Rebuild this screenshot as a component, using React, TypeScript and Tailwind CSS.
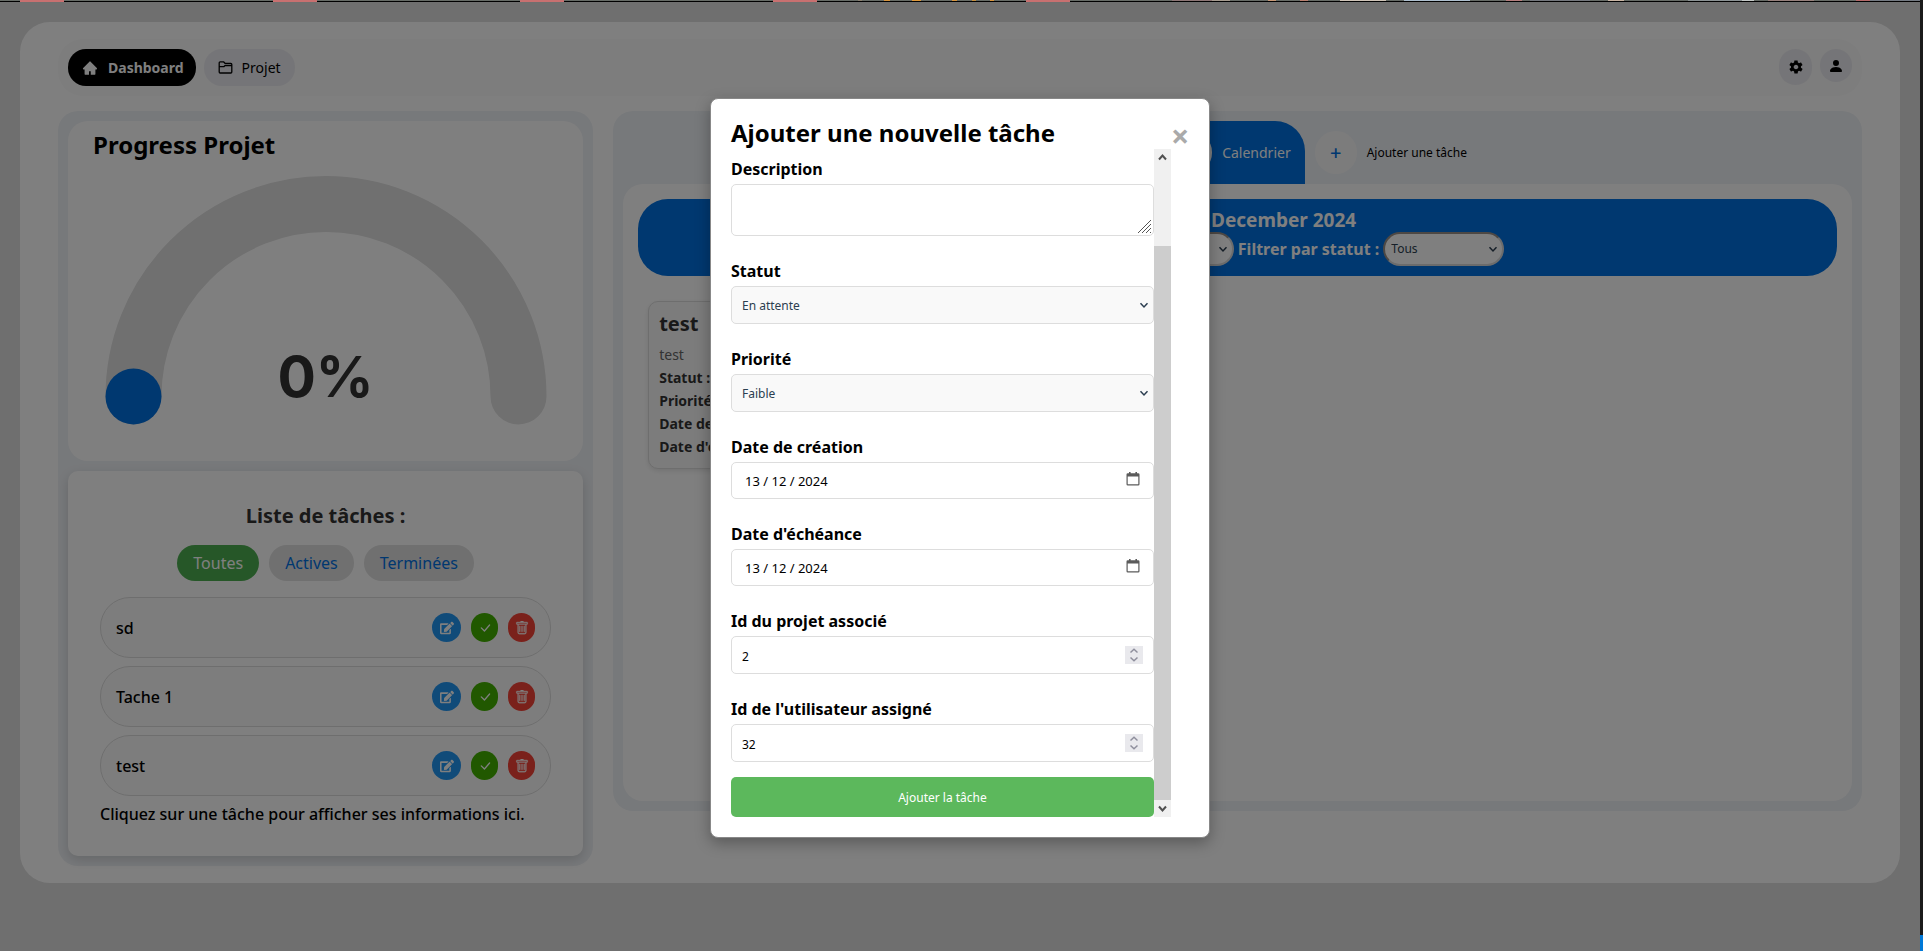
import type { ReactNode } from "react";
import { AiFillHome } from "react-icons/ai";
import { IoMdSettings } from "react-icons/io";
import { BsPersonFill, BsCheckLg, BsTrash } from "react-icons/bs";
import { FaEdit } from "react-icons/fa";

const browserTabs = [20, 273, 520, 773, 1026];
const bookmarks: [number, number, string][] = [
  [858, 4, "#8a7f70"], [884, 6, "#d9963f"], [912, 9, "#e09a3c"], [952, 5, "#d9963f"], [972, 4, "#c8913f"], [990, 4, "#d9963f"],
  [1172, 40, "#8d7676"], [1212, 18, "#a69c90"], [1268, 8, "#c99a78"], [1300, 8, "#b98070"], [1340, 46, "#cfc4b8"],
  [1404, 66, "#aebfce"], [1506, 16, "#b57f7f"], [1530, 60, "#74777d"], [1608, 16, "#c9b5a4"], [1688, 60, "#8b9294"],
  [1742, 12, "#c4c8c6"], [1768, 46, "#96807c"], [1856, 14, "#b56a6a"], [1870, 50, "#747a82"],
];

function Chevron({ className }: { className: string }) {
  return (
    <svg aria-hidden="true" viewBox="0 0 10 10" className={className} fill="none" stroke="currentColor" strokeWidth="1.5">
      <path d="M1.5 3.2 5 7l3.5-3.8" />
    </svg>
  );
}

function FolderIcon() {
  return (
    <svg aria-hidden="true" viewBox="0 0 15 15" className="size-[15px]" fill="none" stroke="currentColor" strokeWidth="1.3" strokeLinejoin="round">
      <path d="M1.200 12V2.800q0-1 1-1h3.300l1.700 1.700h5.600q1 0 1 1V12q0 1-1 1H2.200q-1 0-1-1zM1.200 6.700h4.600l1-1h7" />
    </svg>
  );
}

function TaskItem({ name }: { name: string }) {
  const button = "flex h-[29px] items-center justify-center rounded-full text-white";
  return (
    <li className="flex h-[61px] items-center justify-between rounded-[30px] border border-[#dddddd] bg-[#fbfbfb] px-[15px]">
      <span className="font-medium">{name}</span>
      <span className="flex gap-[10px]">
        <button type="button" aria-label="Modifier" className={`${button} w-[29px] bg-[#2196f3]`}>
          <FaEdit className="size-[14px]" />
        </button>
        <button type="button" aria-label="Terminer" className={`${button} w-[27px] bg-[#43b000]`}>
          <BsCheckLg className="size-[14px]" />
        </button>
        <button type="button" aria-label="Supprimer" className={`${button} w-[27px] bg-[#f44336]`}>
          <BsTrash className="size-[14px]" stroke="currentColor" strokeWidth="0.3" />
        </button>
      </span>
    </li>
  );
}

function Field({ id, label, children }: { id: string; label: string; children: ReactNode }) {
  return (
    <div className="mb-6">
      <label htmlFor={id} className="mb-[3px] block text-base leading-[23px] font-bold">
        {label}
      </label>
      <div className="relative flex">{children}</div>
    </div>
  );
}

const control = "w-full rounded-[5px] border border-[#dddddd] px-[10px] pt-[2px] text-xs";

function SelectField({ id, label, option }: { id: string; label: string; option: string }) {
  return (
    <Field id={id} label={label}>
      <select id={id} className={`${control} h-[38px] appearance-none bg-[#f9f9f9] text-[#2c3e50]`}>
        <option>{option}</option>
      </select>
      <Chevron className="pointer-events-none absolute top-[14px] right-[5px] size-[10px] text-[#2c3e50]" />
    </Field>
  );
}

function DateField({ id, label }: { id: string; label: string }) {
  return (
    <Field id={id} label={label}>
      <input id={id} type="text" defaultValue="13 / 12 / 2024" className="h-[37px] w-full rounded-[5px] border border-[#dddddd] px-[13px] text-[13px]" />
      <svg aria-hidden="true" viewBox="0 0 14 14" className="absolute top-[10px] right-[14px] size-[14px]" fill="#5b5b5b">
        <path fillRule="evenodd" d="M3 0h1.600v1.200h4.800V0H11v1.200h1.200A1.300 1.300 0 0 1 13.500 2.500v9.700a1.300 1.300 0 0 1-1.300 1.300H1.800A1.300 1.300 0 0 1 .5 12.200V2.500a1.300 1.300 0 0 1 1.300-1.300H3zM1.700 4.400v7.500q0 .4.4.4h9.800q.4 0 .4-.4V4.400z" />
      </svg>
    </Field>
  );
}

function NumberField({ id, label, value }: { id: string; label: string; value: string }) {
  return (
    <Field id={id} label={label}>
      <input id={id} type="text" inputMode="numeric" defaultValue={value} className={`${control} h-[38px]`} />
      <svg aria-hidden="true" viewBox="0 0 18 18" className="absolute top-[10px] right-[11px] size-[18px] bg-[#e9e9ed]" fill="none" stroke="#8f8f9d" strokeWidth="1.5">
        <path d="M5.500 6.500 9 3.300l3.500 3.200M5.500 11.500 9 14.700l3.500-3.200" />
      </svg>
    </Field>
  );
}

function ProgressCard() {
  return (
    <section className="h-[340px] rounded-[20px] bg-white px-[25px] pt-[8px]">
      <h2 className="text-2xl leading-8 font-bold">Progress Projet</h2>
      <div className="relative mx-auto mt-[15px] w-[442px]">
        <svg aria-hidden="true" viewBox="0 0 442 249" className="w-full" fill="none" strokeLinecap="round">
          <path d="M28.500 220.500a192.500 192.500 0 0 1 385 0" stroke="#e0e0e0" strokeWidth="56" />
          <circle cx="28.500" cy="220.500" r="28" fill="#0070e0" />
        </svg>
        <p className="absolute inset-x-0 top-[165px] text-center font-['Inter',sans-serif] text-[57px] leading-[72px] font-bold text-[#333333]">0%</p>
      </div>
    </section>
  );
}

function TaskListCard() {
  const pill = "h-[36px] rounded-[18px] px-4";
  return (
    <section className="h-[385px] rounded-[10px] bg-white px-8 pt-8 shadow-[0_4px_12px_rgba(0,0,0,0.15)]">
      <h2 className="text-center text-xl leading-[26px] font-bold text-[#333333]">Liste de tâches :</h2>
      <div className="mt-4 flex justify-center gap-[10px]">
        <button type="button" className={`${pill} bg-[#4caf50] text-white`}>Toutes</button>
        <button type="button" className={`${pill} bg-[#e0e0e0] text-[#0070e0]`}>Actives</button>
        <button type="button" className={`${pill} bg-[#e0e0e0] text-[#0070e0]`}>Terminées</button>
      </div>
      <ul className="mt-4 flex flex-col gap-2">
        <TaskItem name="sd" />
        <TaskItem name="Tache 1" />
        <TaskItem name="test" />
      </ul>
      <p className="mt-[6px] leading-6 font-medium">Cliquez sur une tâche pour afficher ses informations ici.</p>
    </section>
  );
}

function FilterSelect({ label, value }: { label: string; value: string }) {
  return (
    <span className="relative flex">
      <select aria-label={label} className="h-[34px] w-[121px] appearance-none rounded-[17px] border-2 border-t-[#9a9088] border-r-[#d8d8d8] border-b-[#d8d8d8] border-l-[#9a9088] bg-white px-[6px] text-xs font-normal text-[#2c3e50]">
        <option>{value}</option>
      </select>
      <Chevron className="pointer-events-none absolute top-3 right-[6px] size-[10px] text-[#2c3e50]" />
    </span>
  );
}

function CalendarPanel() {
  return (
    <section className="h-[700px] min-w-0 rounded-[20px] bg-[#eff2f6] px-[10px] pt-[10px]">
      <nav className="flex items-center justify-center gap-[10px] pl-[148px]">
        <button type="button" className="flex h-[63px] items-center gap-[10px] rounded-t-[30px] bg-[#0070e0] px-[14px] text-sm text-white">
          <span className="h-[43px] w-[42px] rounded-full bg-white" />
          Calendrier
        </button>
        <button type="button" className="flex items-center gap-[10px] text-xs">
          <span className="flex h-[43px] w-[42px] items-center justify-center rounded-full bg-[#f9f9f9] text-xl font-medium text-[#0070e0]">+</span>
          Ajouter une tâche
        </button>
      </nav>
      <div className="h-[617px] rounded-[20px] bg-white px-[15px] pt-[15px]">
        <header className="flex h-[77px] flex-col items-center rounded-[30px] bg-[#0070e0] pt-[8px] font-bold text-white">
          <h2 className="pl-[92px] text-[19px] leading-[26px]">December 2024</h2>
          <div className="flex h-8 items-center gap-[4px]">
            <span className="w-[138px]" />
            <FilterSelect label="Filtre" value="" />
            <span>Filtrer par statut :</span>
            <FilterSelect label="Filtrer par statut" value="Tous" />
          </div>
        </header>
        <article className="mt-[25px] ml-[10px] w-[240px] rounded-[10px] border border-[#dddddd] bg-[#f9f9f9] px-[10px] pt-[9px] pb-[10px] text-sm leading-[23px] font-bold text-[#333333] shadow-[0_2px_5px_rgba(0,0,0,0.1)]">
          <h3 className="text-xl leading-[26px]">test</h3>
          <p className="mt-[6px] font-normal text-[#666666]">test</p>
          <p>Statut :</p>
          <p>Priorité</p>
          <p>Date de</p>
          <p>Date d'é</p>
        </article>
      </div>
    </section>
  );
}

function TaskModal() {
  return (
    <div role="dialog" aria-labelledby="modal-title" className="flex w-[500px] rounded-[8px] border border-[#888888] bg-white p-5 shadow-[0_5px_15px_rgba(0,0,0,0.3)]">
      <div className="min-w-0 flex-1">
        <h2 id="modal-title" className="text-2xl leading-[28px] font-bold">Ajouter une nouvelle tâche</h2>
        <div className="mt-[2px] flex">
          <form className="min-w-0 flex-1 pt-[9px]" onSubmit={(event) => event.preventDefault()}>
            <Field id="description" label="Description">
              <textarea id="description" className={`${control} h-[52px] resize-none`} />
              <svg aria-hidden="true" viewBox="0 0 15 15" className="absolute right-[2px] bottom-[2px] size-[15px]" stroke="#555555">
                <path d="M1 14 14 1M5 14l9-9M9 14l5-5M13 14l1-1" />
              </svg>
            </Field>
            <SelectField id="statut" label="Statut" option="En attente" />
            <SelectField id="priorite" label="Priorité" option="Faible" />
            <DateField id="creation" label="Date de création" />
            <DateField id="echeance" label="Date d'échéance" />
            <NumberField id="projet" label="Id du projet associé" value="2" />
            <NumberField id="utilisateur" label="Id de l'utilisateur assigné" value="32" />
            <button type="submit" className="-mt-[9px] block h-[40px] w-full rounded-[5px] bg-[#5cb85c] pt-[2px] text-xs text-white">
              Ajouter la tâche
            </button>
          </form>
          <div aria-hidden="true" className="flex w-[17px] flex-col bg-[#f0f0f0] text-[#505050]">
            <svg viewBox="0 0 17 17" className="mb-[80px] w-full" fill="none" stroke="currentColor" strokeWidth="2">
              <path d="m5 10.500 3.500-4 3.500 4" />
            </svg>
            <div className="flex-1 bg-[#cdcdcd]" />
            <svg viewBox="0 0 17 17" className="w-full" fill="none" stroke="currentColor" strokeWidth="2">
              <path d="m5 6.500 3.500 4 3.500-4" />
            </svg>
          </div>
        </div>
      </div>
      <button type="button" aria-label="Fermer" className="h-[34px] w-[18px] text-right text-[32px] leading-[34px] font-bold text-[#aaaaaa]">
        ×
      </button>
    </div>
  );
}

export default function App() {
  return (
    <div className="flex min-h-screen bg-[#1b1b1b] font-['Noto_Sans',sans-serif] text-base text-black">
      <div className="flex min-w-0 flex-1 flex-col">
        <svg aria-hidden="true" viewBox="0 0 1920 2" preserveAspectRatio="none" className="h-[2px] w-full">
          <rect width="1920" height="1" fill="#666b66" />
          <rect y="1" width="1920" height="1" fill="#000000" />
          {browserTabs.map((x) => (
            <rect key={x} x={x} width="44" height="2" fill="#c87070" />
          ))}
          {bookmarks.map(([x, width, fill]) => (
            <rect key={x} x={x} width={width} height="1" fill={fill} />
          ))}
        </svg>
        <div className="relative flex-1 bg-[#dfdfdf] px-5 pt-5 pb-[68px]">
          <main className="rounded-[30px] bg-white px-[38px] pt-[17px] pb-[17px]">
            <header className="flex h-[57px] items-start justify-between rounded-[25px] bg-[#fafafa] px-[10px] pt-[10px]">
              <nav className="flex gap-2 text-sm">
                <a href="#dashboard" className="flex h-[37px] items-center gap-[10px] rounded-[18px] bg-black pr-3 pl-[14px] font-bold text-white">
                  <AiFillHome className="size-[16px]" />
                  Dashboard
                </a>
                <a href="#projet" className="flex h-[37px] items-center gap-[9px] rounded-[18px] bg-[#ebebf0] px-[14px]">
                  <FolderIcon />
                  Projet
                </a>
              </nav>
              <div className="flex gap-2">
                <button type="button" aria-label="Paramètres" className="flex h-[36px] w-[33px] items-center justify-center rounded-full bg-[#ebebf0]">
                  <IoMdSettings className="size-[16px]" />
                </button>
                <button type="button" aria-label="Profil" className="flex h-[33px] w-[32px] items-center justify-center rounded-full bg-[#ebebf0]">
                  <BsPersonFill className="size-[16px]" />
                </button>
              </div>
            </header>
            <div className="mt-[15px] grid grid-cols-[3fr_7fr] items-start gap-5">
              <div className="flex min-w-0 flex-col gap-[10px] rounded-[20px] bg-[#eff2f6] p-[10px]">
                <ProgressCard />
                <TaskListCard />
              </div>
              <CalendarPanel />
            </div>
          </main>
          <div className="absolute inset-0 flex items-start justify-center bg-black/50 pt-[96px]">
            <TaskModal />
          </div>
        </div>
      </div>
      <aside aria-hidden="true" className="flex w-[3px] flex-col justify-end">
        <div className="h-[16px] bg-[#0078d7]" />
      </aside>
    </div>
  );
}
